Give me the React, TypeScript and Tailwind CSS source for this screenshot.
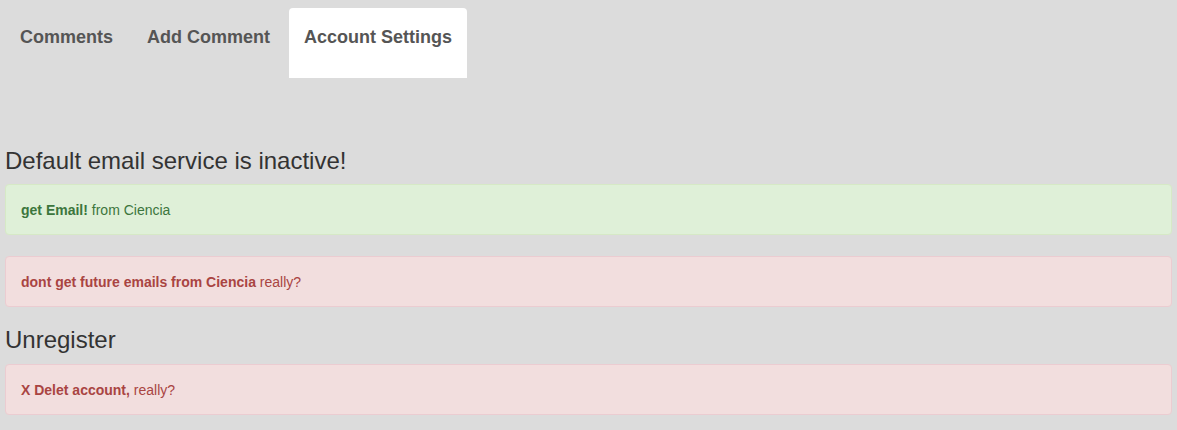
export default function App() {
  const tabs = ["Comments", "Add Comment", "Account Settings"];
  return (
    <div
      className="min-h-[430px] w-full bg-[#dcdcdc] px-[5px] pt-[8px] text-[14px] text-[#333]"
      style={{ fontFamily: '"Liberation Sans", Arial, sans-serif' }}
    >
      <div className="flex gap-[4px]">
        {tabs.map((t, i) => (
          <div
            key={t}
            className={
              "h-[70px] px-[15px] pt-[17px] text-[18px] font-bold leading-[24px] text-[#555] rounded-t-[4px] " +
              (i === 2 ? "bg-white" : "")
            }
          >
            {t}
          </div>
        ))}
      </div>
      <h3 className="mt-[70px] mb-[10px] text-[24px] leading-[26.4px] font-normal text-[#333]">
        Default email service is inactive!
      </h3>
      <div className="rounded-[4px] border border-[#d6e9c6] bg-[#dff0d8] px-[15px] pt-[16px] pb-[14px] leading-[19px] text-[#3c763d]">
        <b>get Email!</b> from Ciencia
      </div>
      <div className="mt-[21px] rounded-[4px] border border-[#ebccd1] bg-[#f2dede] px-[15px] pt-[16px] pb-[14px] leading-[19px] text-[#a94442]">
        <b>dont get future emails from Ciencia</b> really?
      </div>
      <h3 className="mt-[20px] mb-[10px] text-[24px] leading-[26.4px] font-normal text-[#333]">
        Unregister
      </h3>
      <div className="rounded-[4px] border border-[#ebccd1] bg-[#f2dede] px-[15px] pt-[16px] pb-[14px] leading-[19px] text-[#a94442]">
        <b>X Delet account,</b> really?
      </div>
    </div>
  );
}
